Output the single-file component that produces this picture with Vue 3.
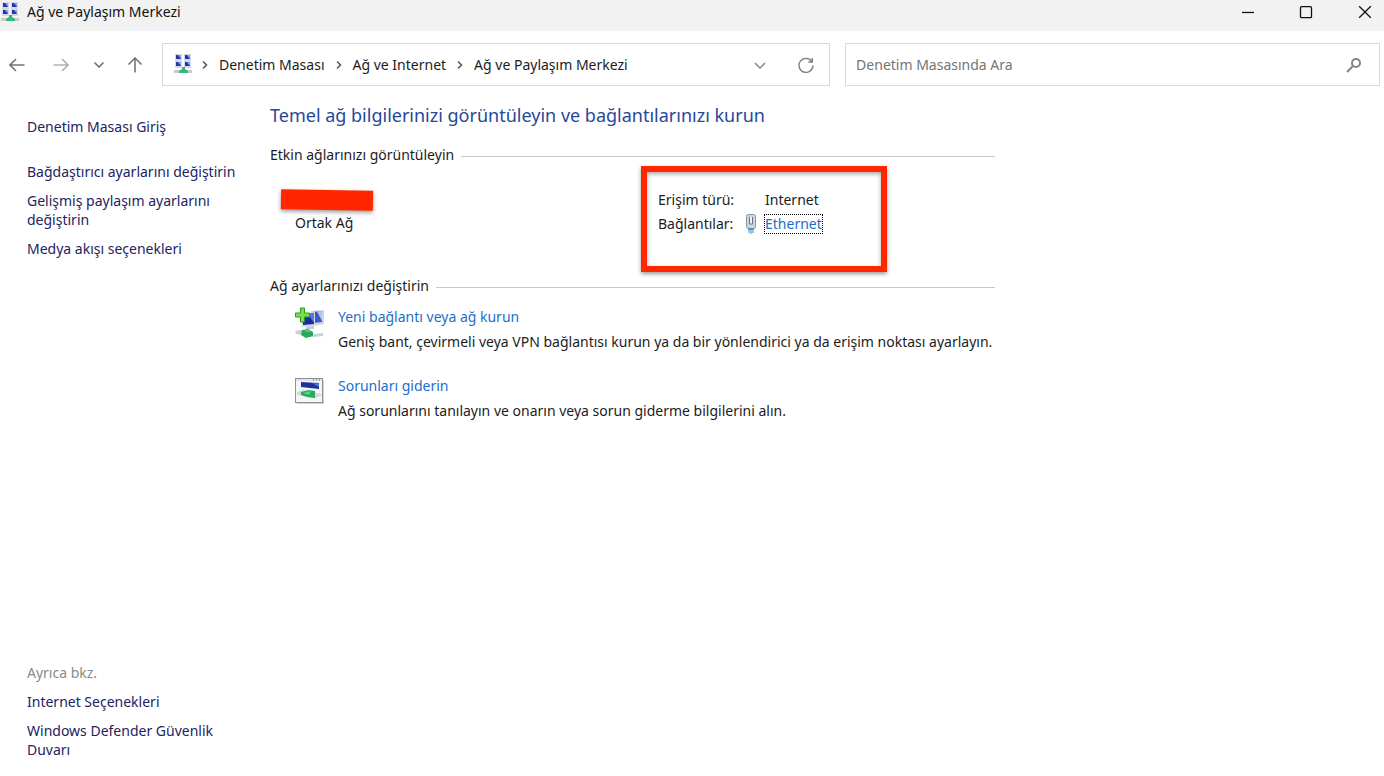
<script setup>
import { ref } from 'vue'

const query = ref('')
const crumbs = ['Denetim Masası', 'Ağ ve Internet', 'Ağ ve Paylaşım Merkezi']
const tasks = [
  'Bağdaştırıcı ayarlarını değiştirin',
  'Gelişmiş paylaşım ayarlarını değiştirin',
  'Medya akışı seçenekleri',
]
const related = ['Internet Seçenekleri', 'Windows Defender Güvenlik Duvarı']
const screens = [[3, 1], [12, 1], [3, 8], [12, 8]]
</script>

<template>
  <div class="window">
    <header class="titlebar">
      <svg class="app-icon" viewBox="0 0 20 21" aria-hidden="true">
        <g v-for="([x, y], i) in screens" :key="i">
          <rect :x="x - 1" :y="y - 1" width="7" height="7" fill="#d3d9ec" />
          <rect :x="x" :y="y" width="5" height="4" fill="#2636a8" />
          <path :d="`M${x + 2} ${y}h3v4z`" fill="#8fa3e6" />
        </g>
        <path d="M1 16h18v3H1z" fill="#c9cccc" />
        <path d="M9 13h3v2l3 2v2H6v-2l3-2z" fill="#2fba7c" />
      </svg>
      <span class="caption">Ağ ve Paylaşım Merkezi</span>
      <div class="controls">
        <button type="button" aria-label="Simge durumuna küçült">
          <svg viewBox="0 0 14 14"><path d="M1 7.5h12" /></svg>
        </button>
        <button type="button" aria-label="Ekranı kapla">
          <svg viewBox="0 0 14 14"><rect x="1.5" y="1.7" width="11" height="11" rx="1" /></svg>
        </button>
        <button type="button" aria-label="Kapat">
          <svg viewBox="0 0 14 14"><path d="M1.2 1.2l11.6 11.6M12.8 1.2L1.2 12.8" /></svg>
        </button>
      </div>
    </header>

    <div class="toolbar">
      <nav class="history" aria-label="Gezinti">
        <button type="button" aria-label="Geri">
          <svg viewBox="0 0 16 16"><path d="M15.5 8H1M7 2L1 8l6 6" /></svg>
        </button>
        <button type="button" class="faded" aria-label="İleri">
          <svg viewBox="0 0 16 16"><path d="M.5 8H15M9 2l6 6-6 6" /></svg>
        </button>
        <button type="button" aria-label="Son konumlar">
          <svg viewBox="0 0 16 16"><path d="M3.5 5.5L8 10l4.5-4.5" /></svg>
        </button>
        <button type="button" aria-label="Yukarı">
          <svg viewBox="0 0 16 16"><path d="M8 15.5V1M1.5 7.5L8 1l6.5 6.5" /></svg>
        </button>
      </nav>

      <div class="address">
        <svg class="app-icon" viewBox="0 0 20 21" aria-hidden="true">
          <g v-for="([x, y], i) in screens" :key="i">
            <rect :x="x - 1" :y="y - 1" width="7" height="7" fill="#d3d9ec" />
            <rect :x="x" :y="y" width="5" height="4" fill="#2636a8" />
            <path :d="`M${x + 2} ${y}h3v4z`" fill="#8fa3e6" />
          </g>
          <path d="M1 16h18v3H1z" fill="#c9cccc" />
          <path d="M9 13h3v2l3 2v2H6v-2l3-2z" fill="#2fba7c" />
        </svg>
        <ol class="crumbs">
          <li v-for="crumb in crumbs" :key="crumb">
            <svg class="sep" viewBox="0 0 8 10" aria-hidden="true"><path d="M2 1.5L5.5 5 2 8.5" /></svg>
            <a href="#">{{ crumb }}</a>
          </li>
        </ol>
        <button type="button" aria-label="Önceki konumlar">
          <svg viewBox="0 0 16 16"><path d="M3 6l5 5 5-5" /></svg>
        </button>
        <button type="button" aria-label="Yenile">
          <svg viewBox="0 0 16 16"><path d="M13.7 4.3A7 7 0 1 0 15 8.500M14.300 1V5H10.300" /></svg>
        </button>
      </div>

      <form class="search" @submit.prevent>
        <input v-model="query" type="search" placeholder="Denetim Masasında Ara" aria-label="Denetim Masasında Ara" />
        <button type="submit" aria-label="Ara">
          <svg viewBox="0 0 16 16"><circle cx="10" cy="6" r="4" /><path d="M7 9L1 15" /></svg>
        </button>
      </form>
    </div>

    <div class="body">
      <aside class="sidebar">
        <a class="home" href="#">Denetim Masası Giriş</a>
        <ul>
          <li v-for="task in tasks" :key="task"><a href="#">{{ task }}</a></li>
        </ul>
        <div class="related">
          <p>Ayrıca bkz.</p>
          <ul>
            <li v-for="item in related" :key="item"><a href="#">{{ item }}</a></li>
          </ul>
        </div>
      </aside>

      <main>
        <h1>Temel ağ bilgilerinizi görüntüleyin ve bağlantılarınızı kurun</h1>

        <section>
          <h2>Etkin ağlarınızı görüntüleyin</h2>
          <div class="network">
            <div class="identity">
              <div class="redacted"></div>
              <p>Ortak Ağ</p>
            </div>
            <dl class="details">
              <dt>Erişim türü:</dt>
              <dd>Internet</dd>
              <dt>Bağlantılar:</dt>
              <dd class="connection">
                <svg viewBox="0 0 12 20" aria-hidden="true">
                  <rect x="1.5" y="0.5" width="9" height="14" rx="2" fill="#cfd6dd" stroke="#8a949e" />
                  <path d="M4.5 3v7h3V3" fill="#f1f4f6" stroke="#66737f" />
                  <path d="M3 14h6v2H3z" fill="#4d9cb5" />
                  <path d="M4 16v3M6 16v4M8 16v3" stroke="#2f95b8" />
                </svg>
                <a href="#">Ethernet</a>
              </dd>
            </dl>
          </div>
        </section>

        <section>
          <h2>Ağ ayarlarınızı değiştirin</h2>
          <ul class="actions">
            <li>
              <svg viewBox="0 0 30 32" aria-hidden="true">
                <path d="M16 4l13-1v14l-12 2z" fill="#cdd5e6" />
                <path d="M18 5l9-1v11l-9 1z" fill="#3f58c4" />
                <path d="M22 4.500l5-.5v10z" fill="#b4c4f2" />
                <path d="M6 7l14-2v14L7 20z" fill="#d2d9e8" />
                <path d="M8 8l11-2v11L8 18z" fill="#1b2b9d" />
                <path d="M13 7l6-1v10z" fill="#5a78d8" />
                <path d="M11 20l8-1v3h-8z" fill="#c3c9d0" />
                <path d="M0 24l6-1 14 4 8-1v3l-9 1L1 27z" fill="#cbd1d2" />
                <path d="M7 23l6-1 5 3v4l-7 2-5-3z" fill="#28a95b" />
                <path d="M8 24l5-1 3 2z" fill="#6bda91" />
                <path d="M5.500 1h4v5h5v4h-5v5h-4v-5h-5V6h5z" fill="#7bdc4c" stroke="#2d971c" />
              </svg>
              <div>
                <a href="#">Yeni bağlantı veya ağ kurun</a>
                <p>Geniş bant, çevirmeli veya VPN bağlantısı kurun ya da bir yönlendirici ya da erişim noktası ayarlayın.</p>
              </div>
            </li>
            <li>
              <svg viewBox="0 0 30 32" aria-hidden="true">
                <path d="M2 4h27v24H2z" fill="#d2d2d2" />
                <rect x="0.5" y="2.500" width="27" height="24" fill="#f4f6f8" stroke="#8c9196" />
                <path d="M1 3h26v2H1z" fill="#dfe3e8" />
                <path d="M18 4h1M21 4h1M24 4h1" stroke="#4c5661" />
                <path d="M6 6l18 1v6L6 11z" fill="#1f2f9c" />
                <path d="M17 7l7 .5V11z" fill="#5c76d4" />
                <path d="M2 16l6-2 18 4v2l-6 2L2 19z" fill="#d3d8da" />
                <path d="M6 16l8-2 6 1v7l-8-1-6-2z" fill="#27ac58" />
                <path d="M8 17l8-2-2 4z" fill="#5fd386" />
              </svg>
              <div>
                <a href="#">Sorunları giderin</a>
                <p>Ağ sorunlarını tanılayın ve onarın veya sorun giderme bilgilerini alın.</p>
              </div>
            </li>
          </ul>
        </section>
      </main>
    </div>
  </div>
</template>

<style>
body {
  margin: 0;
  background: #fff;
}
</style>

<style scoped>
.window {
  display: flex;
  flex-direction: column;
  min-height: 100vh;
  box-sizing: border-box;
  font: 14px/20px "Noto Sans", "Open Sans", sans-serif;
  color: #1c1c1c;
}
ul, ol, dl, dd, p, h1, h2 {
  margin: 0;
  padding: 0;
  list-style: none;
  font-weight: 400;
}
a {
  color: inherit;
  text-decoration: none;
}
button {
  display: flex;
  align-items: center;
  justify-content: center;
  padding: 0;
  border: 0;
  background: none;
  color: inherit;
}
button svg, .sep {
  fill: none;
  stroke: currentColor;
}
.app-icon {
  flex: none;
  width: 20px;
  height: 21px;
}
.titlebar {
  display: flex;
  align-items: center;
  height: 31px;
  padding-bottom: 7px;
  box-sizing: border-box;
  background: #f2f2f2;
  color: #111;
}
.caption {
  margin-left: 7px;
}
.controls {
  display: flex;
  margin-left: auto;
}
.controls button {
  width: 58px;
  height: 24px;
}
.controls button:last-child {
  width: 38px;
  margin-left: 11px;
}
.controls svg {
  width: 14px;
  height: 14px;
  stroke-width: 1.3;
}
.toolbar {
  display: flex;
  align-items: center;
  padding: 12px 4px 0 0;
}
.history {
  display: flex;
  flex: none;
  width: 162px;
  color: #757575;
}
.history button {
  width: 34px;
  height: 40px;
}
.history button:nth-child(2) {
  width: 54px;
}
.history button:nth-child(3) {
  width: 22px;
}
.history button:nth-child(4) {
  width: 50px;
}
.history .faded {
  color: #b0b0b0;
}
.history svg {
  width: 16px;
  height: 16px;
  stroke-width: 1.6;
}
.address, .search {
  display: flex;
  align-items: center;
  height: 43px;
  box-sizing: border-box;
  border: 1px solid #d9d9d9;
}
.address {
  flex: 5 1 0;
}
.address .app-icon {
  margin-left: 10px;
}
.search {
  flex: 4 1 0;
  margin-left: 15px;
}
.crumbs {
  display: flex;
  flex: 1;
}
.crumbs li {
  display: flex;
  align-items: center;
  white-space: nowrap;
}
.sep {
  width: 8px;
  height: 10px;
  margin: 0 10px;
  color: #555;
  stroke-width: 1.5;
}
.crumbs li:first-child .sep {
  margin-left: 8px;
}
.address button {
  width: 46px;
  height: 40px;
  color: #808080;
}
.address button svg {
  width: 16px;
  height: 16px;
  stroke-width: 1.4;
}
.search input {
  flex: 1;
  min-width: 0;
  padding: 0 10px;
  border: 0;
  outline: 0;
  background: none;
  font: inherit;
  color: #1c1c1c;
}
.search input::placeholder {
  color: #757575;
  opacity: 1;
}
.search button {
  width: 50px;
  height: 40px;
  color: #858585;
}
.search button svg {
  width: 16px;
  height: 16px;
  stroke-width: 2;
}
.body {
  display: flex;
  flex: 1;
}
.sidebar {
  display: flex;
  flex-direction: column;
  flex: none;
  width: 270px;
  box-sizing: border-box;
  padding: 31px 34px 17px 27px;
  line-height: 19px;
  color: #23235f;
}
.sidebar ul {
  display: grid;
  gap: 10px;
}
.home {
  margin-bottom: 26px;
}
.related {
  margin-top: auto;
}
.related p {
  margin-bottom: 10px;
  color: #8a8a8a;
}
main {
  flex: 1;
  max-width: 725px;
  padding-top: 16px;
}
h1 {
  font-size: 18px;
  line-height: 26px;
  color: #27489a;
  white-space: nowrap;
}
h2 {
  display: flex;
  align-items: center;
  gap: 7px;
  font-size: 14px;
  line-height: 20px;
  white-space: nowrap;
}
h2::after {
  content: "";
  flex: 1;
  height: 1px;
  margin-top: 3px;
  background: #c8c8c8;
}
section:first-of-type {
  margin-top: 17px;
}
.network {
  display: flex;
  justify-content: space-between;
  padding: 1px 108px 4px 11px;
}
.identity {
  padding-top: 24px;
}
.identity p {
  padding: 3px 0 0 14px;
}
.redacted {
  width: 92px;
  height: 20px;
  background: #ff2600;
  box-shadow: 0 2px 4px rgba(0, 0, 0, 0.4);
  transform: rotate(1deg);
}
.details {
  display: grid;
  grid-template-columns: 86px 1fr;
  align-content: start;
  row-gap: 4px;
  width: 246px;
  height: 106px;
  box-sizing: border-box;
  padding: 18px 12px 0 11px;
  border: 6px solid #ff2600;
  box-shadow: 0 2px 4px rgba(0, 0, 0, 0.4), inset 0 2px 4px rgba(0, 0, 0, 0.35);
}
.details dd {
  padding-left: 21px;
}
.details .connection {
  display: flex;
  align-items: center;
  gap: 8px;
  padding-left: 1px;
}
.connection svg {
  width: 12px;
  height: 20px;
  fill: none;
}
.connection a {
  line-height: 18px;
  color: #1a6fc9;
  outline: 1px dotted #000;
}
.actions {
  display: grid;
  gap: 24px;
  padding: 11px 0 0 25px;
}
.actions li {
  display: flex;
  gap: 13px;
}
.actions svg {
  flex: none;
  width: 30px;
  height: 32px;
}
.actions a {
  color: #1a6fc9;
}
.actions p {
  margin-top: 5px;
  white-space: nowrap;
}
</style>
